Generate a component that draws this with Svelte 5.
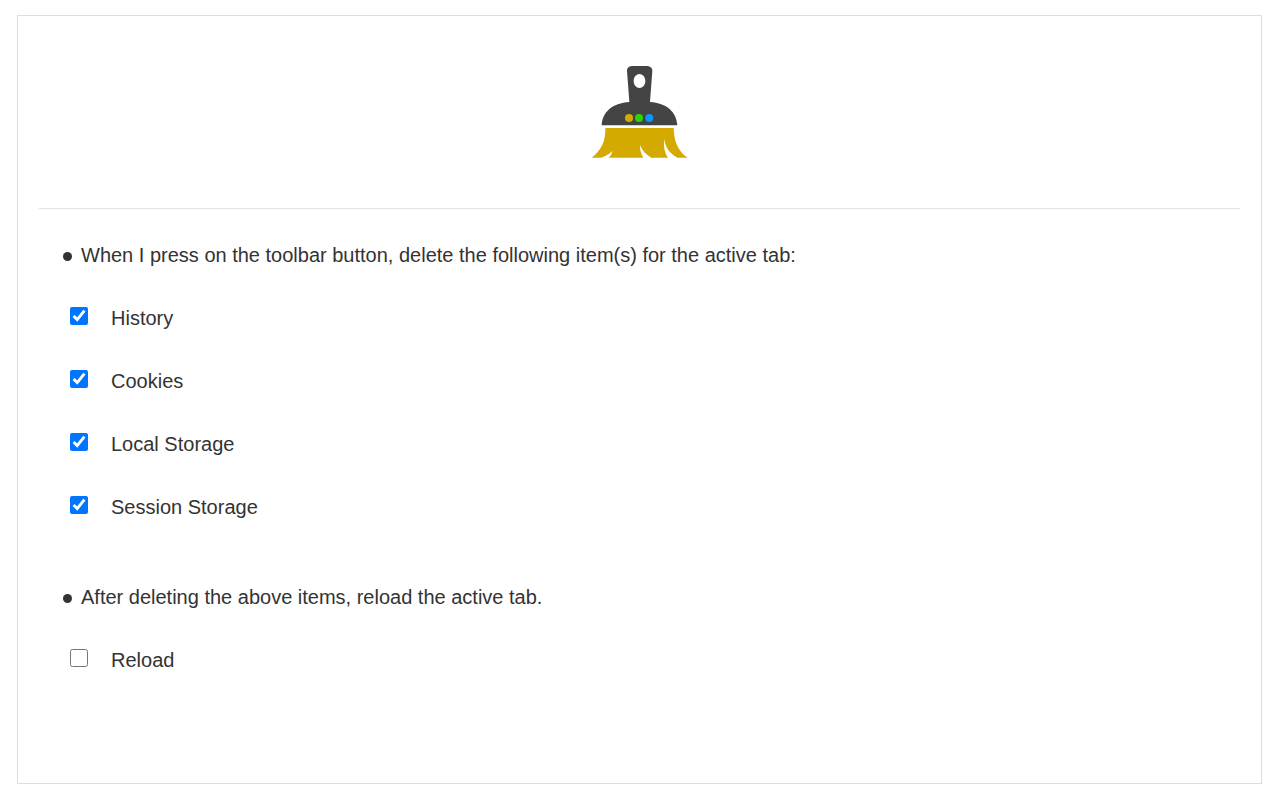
<script lang="ts">
  interface Option {
    id: string;
    label: string;
    checked: boolean;
  }

  interface Section {
    title: string;
    options: Option[];
  }

  let sections: Section[] = $state([
    {
      title: 'When I press on the toolbar button, delete the following item(s) for the active tab:',
      options: [
        { id: 'history', label: 'History', checked: true },
        { id: 'cookies', label: 'Cookies', checked: true },
        { id: 'local-storage', label: 'Local Storage', checked: true },
        { id: 'session-storage', label: 'Session Storage', checked: true }
      ]
    },
    {
      title: 'After deleting the above items, reload the active tab.',
      options: [{ id: 'reload', label: 'Reload', checked: false }]
    }
  ]);
</script>

<main class="container">
  <header class="header">
    <svg class="logo" viewBox="30 30 300 282" aria-hidden="true">
      <!-- handle and dome -->
      <path
        fill="#444"
        fill-rule="evenodd"
        d="M65 211 C67 171 97 144 148 141 L141 47 C141 37 149 33 160 33 H198 C210 33 217 38 217 47 L210 141 C260 144 290 171 292 211 Z M178.500 57 C169 57 161 66 161 78 C161 90 169 99 178.500 99 C188 99 196 90 196 78 C196 66 188 57 178.500 57 Z"
      />
      <circle cx="147" cy="189" r="12" fill="#d4aa00" />
      <circle cx="177" cy="189" r="12" fill="#2ad40a" />
      <circle cx="208" cy="189" r="12" fill="#0f94fa" />
      <!-- bristles -->
      <path
        fill="#d4aa00"
        d="M76 219 H281 C282 260 294 289 323 308 H293 C271 298 256 279 253 253 C250 275 254 293 264 308 H214 C199 300 187 288 180 271 C180 286 183 298 190 308 H86 C92 303 96 296 97 288 C88 297 76 305 63 308 H35 C65 285 77 257 76 219 Z"
      />
    </svg>
  </header>

  <div class="content">
    {#each sections as section}
      <section class="section">
        <h2 class="title"><span class="bullet"></span>{section.title}</h2>
        {#each section.options as option (option.id)}
          <div class="option">
            <input type="checkbox" id={option.id} bind:checked={option.checked} />
            <label for={option.id}>{option.label}</label>
          </div>
        {/each}
      </section>
    {/each}
  </div>
</main>

<style>
  :global(body) {
    margin: 0;
    background: #fff;
  }

  /* keeps the container's margins inside the page */
  :global(#app) {
    display: flow-root;
  }

  .container {
    box-sizing: border-box;
    min-height: calc(100vh - 31px);
    margin: 15px 18px 16px 17px;
    padding: 0 21px;
    border: 1px solid #ddd;
    color: #333;
    font-family: "Liberation Sans", Arial, sans-serif;
    font-size: 20px;
  }

  .header {
    display: flex;
    justify-content: center;
    padding: 49px 0;
    border-bottom: 1px solid #e3e3e3;
  }

  .logo {
    display: block;
    width: 100px;
    height: 94px;
  }

  .content {
    padding: 15px 24px 40px;
  }

  .section + .section {
    margin-top: 27px;
  }

  .title {
    display: flex;
    align-items: center;
    margin: 0;
    font-size: inherit;
    font-weight: normal;
    line-height: 63px;
  }

  .bullet {
    width: 9px;
    height: 9px;
    margin: 2px 9px 0 0;
    border-radius: 50%;
    background: #333;
  }

  .option {
    display: flex;
    align-items: center;
    line-height: 63px;
  }

  .option input {
    width: 18px;
    height: 18px;
    margin: 0 23px 6px 7px;
  }
</style>
